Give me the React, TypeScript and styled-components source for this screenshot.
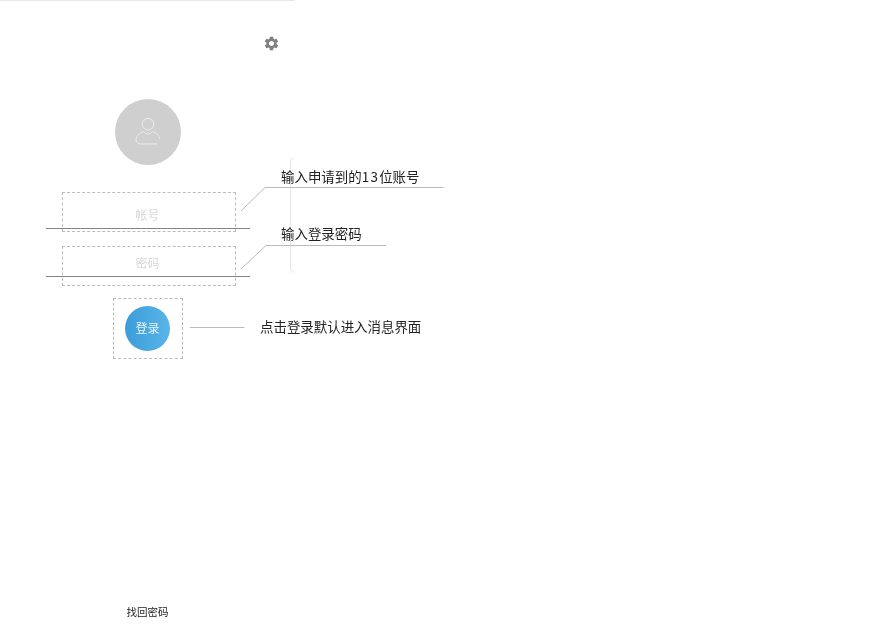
import React from "react";
import styled, { createGlobalStyle } from "styled-components";
import { MdSettings } from "react-icons/md";

const Global = createGlobalStyle`
  html, body { margin: 0; padding: 0; background: #fff; }
  body { font-family: "Noto Sans CJK SC", "Noto Sans", sans-serif; }
`;

const Canvas = styled.div`
  position: relative;
  width: 881px;
  height: 636px;
  overflow: hidden;
  background: #fff;
  filter: blur(0.5px);
`;

const Phone = styled.main`
  width: 295px;
  height: 636px;
  box-sizing: border-box;
  border-top: 1px solid #e8e8e8;
  padding-bottom: 16px;
  display: flex;
  flex-direction: column;
  align-items: center;
`;

const TopBar = styled.header`
  align-self: stretch;
  height: 84px;
  margin-bottom: 14px;
  padding-right: 15px;
  display: flex;
  align-items: center;
  justify-content: flex-end;
  color: #808080;
  font-size: 17px;
`;

const Avatar = styled.div`
  width: 66px;
  height: 66px;
  border-radius: 50%;
  background: #cfcfcf;
  margin-bottom: 23px;
  display: flex;
  align-items: center;
  justify-content: center;
`;

const Field = styled.div`
  position: relative;
  width: 204px;
  height: 40px;
  border-bottom: 1px solid #858585;
  margin-bottom: 7px;
  text-align: center;
`;

const Placeholder = styled.span`
  display: block;
  padding-top: 19px;
  font-size: 12px;
  line-height: 16px;
  color: #d6d6d6;
`;

const DashedMark = styled.div<{ $top: number }>`
  position: absolute;
  left: 16px;
  top: ${(p) => p.$top}px;
  width: 174px;
  height: 40px;
  box-sizing: border-box;
  border: 1px dashed #bcbcbc;
`;

const LoginFrame = styled.div`
  width: 70px;
  height: 61px;
  box-sizing: border-box;
  margin: 14px 0 0 1px;
  padding: 0 1px 1px 0;
  border: 1px dashed #bcbcbc;
  display: flex;
  align-items: center;
  justify-content: center;
`;

const LoginButton = styled.button`
  width: 45px;
  height: 45px;
  padding: 0;
  border: 0;
  border-radius: 50%;
  background: linear-gradient(90deg, #3d9cd8, #58b6ea);
  color: #e8f4fb;
  font-family: inherit;
  font-size: 12px;
  line-height: 16px;
`;

const Forgot = styled.a`
  margin-top: auto;
  font-size: 10.5px;
  line-height: 16px;
  color: #222;
`;

const Wires = styled.svg`
  position: absolute;
  inset: 0;
  width: 881px;
  height: 636px;
  pointer-events: none;
`;

const Note = styled.span<{ $x: number; $y: number }>`
  position: absolute;
  left: ${(p) => p.$x}px;
  top: ${(p) => p.$y}px;
  font-size: 13.45px;
  line-height: 20px;
  color: #222;
  white-space: nowrap;
`;

const Digits = styled.span`
  letter-spacing: 1.3px;
`;

export default function App() {
  return (
    <>
      <Global />
      <Canvas>
        <Phone>
          <TopBar>
            <MdSettings />
          </TopBar>
          <Avatar>
            <svg width="26" height="29" viewBox="0 0 26 29" fill="none" stroke="#ececec" strokeWidth="1">
              <circle cx="13" cy="6.2" r="5.8" />
              <path d="M22 26H6C3 26 1 24 1 21.500C1 18 5 14.500 8.500 13.500C10 15.500 11.500 16 13 16C14.500 16 16 15.500 17.500 13.500C21 14.500 24.500 17.500 24.500 21" />
            </svg>
          </Avatar>
          <Field>
            <Placeholder>帐号</Placeholder>
            <DashedMark $top={4} />
          </Field>
          <Field>
            <Placeholder>密码</Placeholder>
            <DashedMark $top={10} />
          </Field>
          <LoginFrame>
            <LoginButton>登录</LoginButton>
          </LoginFrame>
          <Forgot>找回密码</Forgot>
        </Phone>

        <Wires viewBox="0 0 881 636" fill="none">
          <path d="M294 158.500H293C291 158.500 290.500 160 290.500 162V268C290.500 270.500 291.500 272 294 272" stroke="#e6e6e6" />
          <path d="M241 211L265 187.500H443.500" stroke="#bbbbbb" />
          <path d="M241 269L266 245.500H386" stroke="#bbbbbb" />
          <path d="M190 327.500H244.500" stroke="#bbbbbb" />
        </Wires>
        <Note $x={281} $y={166}>输入申请到的<Digits>13</Digits>位账号</Note>
        <Note $x={281} $y={223}>输入登录密码</Note>
        <Note $x={260} $y={316}>点击登录默认进入消息界面</Note>
      </Canvas>
    </>
  );
}
